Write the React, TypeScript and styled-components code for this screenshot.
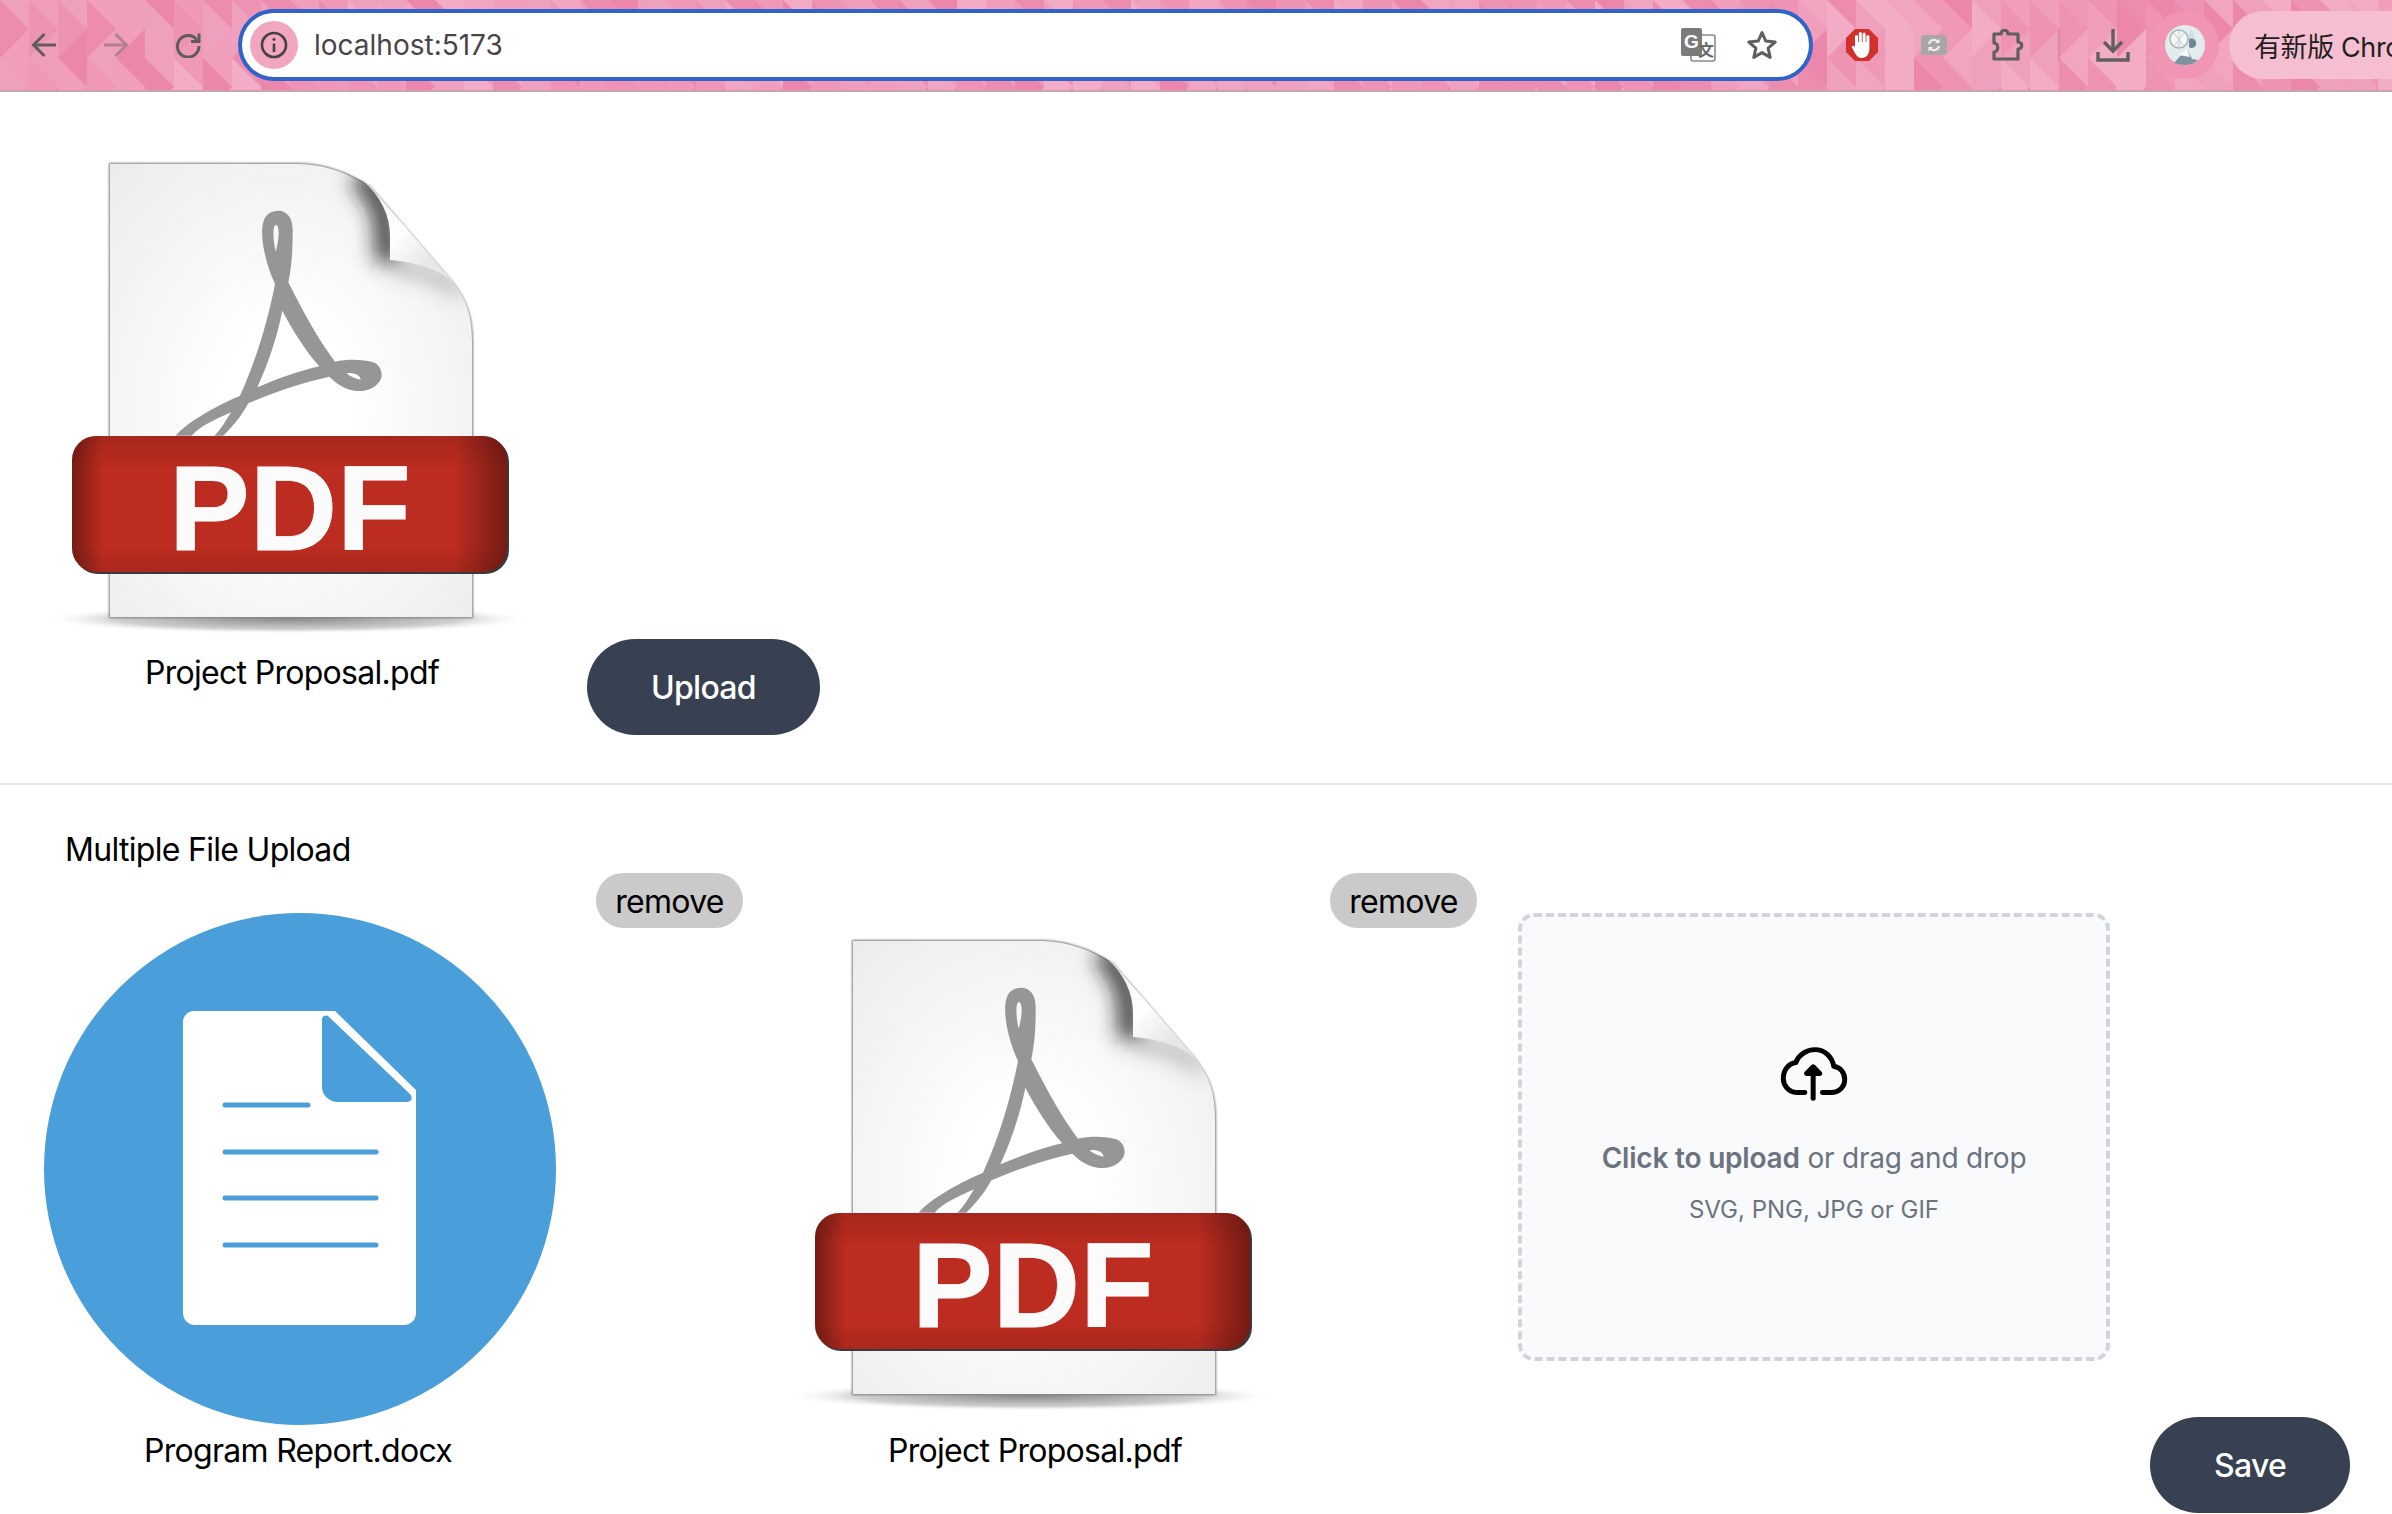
import React from "react";
import styled, { createGlobalStyle } from "styled-components";

const GlobalStyle = createGlobalStyle`
    html, body {
        margin: 0;
        padding: 0;
        background: #ffffff;
        overflow: hidden;
    }
    body {
        font-family: Inter, "Liberation Sans", "Noto Sans CJK SC", sans-serif;
        color: #000000;
    }
`;

const Page = styled.div`
    width: 2392px;
    height: 1514px;
    overflow: hidden;
    display: flex;
    flex-direction: column;
`;

const BrowserBar = styled.div`
    position: relative;
    height: 90px;
    flex: none;
    display: flex;
    align-items: center;
    padding-left: 8px;
    border-bottom: 2px solid #c9a3b3;
    background: #ee97b6;
    overflow: hidden;
`;

const Pattern = styled.svg`
    position: absolute;
    left: 0;
    top: 0;
`;

const Slot = styled.div<{ $gap?: number }>`
    position: relative;
    width: 72px;
    height: 72px;
    flex: none;
    margin-left: ${p => p.$gap || 0}px;
    display: flex;
    align-items: center;
    justify-content: center;
`;

const AddressPill = styled.div`
    position: relative;
    width: 1575px;
    height: 72px;
    flex: none;
    margin-left: 14px;
    box-sizing: border-box;
    border: 4px solid #2f63c9;
    border-radius: 36px;
    background: #ffffff;
    display: flex;
    align-items: center;
    padding: 0 31px 0 8px;
`;

const InfoChip = styled.div`
    width: 48px;
    height: 48px;
    flex: none;
    border-radius: 50%;
    background: #f2a7c0;
    display: flex;
    align-items: center;
    justify-content: center;
`;

const UrlText = styled.div`
    margin-left: 16px;
    flex: 1;
    font-size: 28px;
    line-height: 36px;
    color: #4b4347;
`;

const PillIcons = styled.div`
    display: flex;
    align-items: center;
    gap: 30px;
`;

const ToolbarRule = styled.div`
    position: relative;
    width: 2px;
    height: 32px;
    flex: none;
    margin: 0 17px 0 16px;
    background: #d98aa6;
`;

const AvatarRing = styled.div`
    position: relative;
    width: 68px;
    height: 68px;
    flex: none;
    margin-left: 2px;
    border-radius: 50%;
    background: #f195b5;
    display: flex;
    align-items: center;
    justify-content: center;
`;

const UpdatePill = styled.div`
    position: relative;
    height: 68px;
    width: 240px;
    flex: none;
    margin-left: 10px;
    box-sizing: border-box;
    padding-left: 25px;
    border-radius: 34px 0 0 34px;
    background: #f6bed1;
    display: flex;
    align-items: center;
    font-size: 27px;
    letter-spacing: -0.4px;
    color: #1f1f1f;
    white-space: nowrap;
    overflow: hidden;
`;

const SingleSection = styled.section`
    display: flex;
    align-items: flex-end;
    gap: 39px;
    padding: 44px 0 48px 36px;
    border-bottom: 2px solid #e5e7eb;
`;

const FileColumn = styled.div<{ $pushDown?: number; $bottom?: number }>`
    width: 512px;
    flex: none;
    padding-top: ${p => p.$pushDown || 0}px;
    margin-bottom: ${p => p.$bottom || 0}px;
    display: flex;
    flex-direction: column;
    align-items: center;
`;

const FileName = styled.div<{ $top?: number; $nudge?: number }>`
    margin-top: ${p => p.$top || 0}px;
    margin-right: ${p => p.$nudge || 0}px;
    height: 48px;
    font-size: 32px;
    line-height: 50px;
    letter-spacing: -0.7px;
    white-space: nowrap;
`;

const DarkButton = styled.button`
    height: 96px;
    box-sizing: border-box;
    padding: 0 64px;
    border: none;
    border-radius: 48px;
    background: #374151;
    color: #ffffff;
    font-family: inherit;
    font-size: 32px;
    font-weight: 500;
    letter-spacing: -0.7px;
`;

const SectionTitle = styled.div`
    height: 48px;
    padding: 40px 0 0 65px;
    font-size: 32px;
    line-height: 50px;
    letter-spacing: -0.7px;
`;

const UploadRow = styled.div`
    display: flex;
    align-items: flex-start;
    padding-left: 44px;
`;

const RemoveButton = styled.button<{ $left: number; $right: number }>`
    height: 55px;
    width: 147px;
    flex: none;
    margin: 0 ${p => p.$right}px 0 ${p => p.$left}px;
    padding: 2px 0 0;
    border: none;
    border-radius: 28px;
    background: #cacaca;
    color: #000000;
    font-family: inherit;
    font-size: 32px;
    letter-spacing: -0.7px;
`;

const DropZone = styled.div`
    width: 592px;
    height: 448px;
    flex: none;
    margin-top: 40px;
    box-sizing: border-box;
    padding-bottom: 4px;
    border: 4px dashed #d1d5db;
    border-radius: 16px;
    background: #f9fafb;
    display: flex;
    flex-direction: column;
    align-items: center;
    justify-content: center;
`;

const CloudIcon = styled.svg`
    margin-bottom: 36px;
`;

const PuzzleSvg = styled.svg`
    margin-left: 4px;
`;

const DropText = styled.div`
    font-size: 28px;
    line-height: 40px;
    letter-spacing: -0.2px;
    color: #6b7280;
    margin-bottom: 16px;
    b {
        font-weight: 600;
    }
`;

const DropHint = styled.div`
    font-size: 24px;
    line-height: 32px;
    color: #6b7280;
`;

const SaveSlot = styled.div`
    margin: 544px 0 0 40px;
    flex: none;
`;

// Triangle wallpaper of the browser theme, seeded so that it stays the same between runs
const pinks = ["#ec8db0", "#ee93b4", "#ef98b8", "#f09ebc", "#f2a5c1", "#f3acc6", "#ea87ab", "#efa0bd"];

const buildTriangles = () => {
    let seed = 17;
    const next = () => {
        seed = (seed * 9301 + 49297) % 233280;
        return seed / 233280;
    };
    const out: { points: string; fill: string }[] = [];
    const w = 29;
    const h = 58;
    for (let c = 0; c < 84; c++) {
        const x = c * w;
        const off = c % 2 === 0 ? 0 : -h / 2;
        for (let r = -1; r < 4; r++) {
            const y = off + r * h;
            const right = c % 2 === 0;
            out.push({
                points: right ? `${x},${y} ${x + w},${y + h / 2} ${x},${y + h}` : `${x + w},${y} ${x},${y + h / 2} ${x + w},${y + h}`,
                fill: pinks[Math.floor(next() * pinks.length)],
            });
            out.push({
                points: right
                    ? `${x},${y + h} ${x + w},${y + h / 2} ${x + w},${y + h + h / 2}`
                    : `${x + w},${y + h} ${x},${y + h / 2} ${x},${y + h + h / 2}`,
                fill: pinks[Math.floor(next() * pinks.length)],
            });
        }
    }
    return out;
};

const triangles = buildTriangles();

const ThemePattern = () => (
    <Pattern width="2392" height="90">
        {triangles.map((t, i) => (
            <polygon key={i} points={t.points} fill={t.fill} />
        ))}
    </Pattern>
);

const ArrowIcon = ({ flip, color }: { flip?: boolean; color: string }) => (
    <svg width="26" height="26" viewBox="0 0 26 26" fill="none" stroke={color} strokeWidth="3">
        <g transform={flip ? "rotate(180 13 13)" : undefined}>
            <path d="M25 13H3" />
            <path d="M13.5 2L2.5 13l11 11" />
        </g>
    </svg>
);

const ReloadIcon = () => (
    <svg width="26" height="26" viewBox="0 0 26 26" fill="none" stroke="#5c5c5c" strokeWidth="3">
        <path d="M22 8A10.8 10.8 0 1 0 24 14" />
        <path d="M24 1.5V9.5H16" />
    </svg>
);

const InfoIcon = () => (
    <svg width="28" height="28" viewBox="0 0 28 28" fill="none" stroke="#4a3f44" strokeWidth="2.6">
        <circle cx="14" cy="14" r="12" />
        <path d="M14 12.5V21" />
        <circle cx="14" cy="8.4" r="1.2" fill="#4a3f44" strokeWidth="0.8" />
    </svg>
);

const TranslateIcon = () => (
    <svg width="35" height="34" viewBox="0 0 35 34">
        <rect x="10" y="7" width="24" height="26" rx="2" fill="#ffffff" stroke="#8a8a8a" strokeWidth="1.6" />
        <rect x="0" y="0" width="21" height="28" rx="2" fill="#7b7b7b" />
        <text x="3" y="20" fontFamily="Liberation Sans, sans-serif" fontWeight="700" fontSize="19" fill="#ffffff">
            G
        </text>
        <text x="17" y="28" fontFamily="Noto Sans CJK SC, sans-serif" fontWeight="700" fontSize="16" fill="#6a6a6a">
            文
        </text>
    </svg>
);

const StarIcon = () => (
    <svg width="32" height="32" viewBox="0 0 32 32" fill="none" stroke="#5f5f5f" strokeWidth="3" strokeLinejoin="round">
        <path d="M16 3.5l3.8 8.6 9.4.9-7.1 6.2 2.1 9.2-8.2-4.8-8.2 4.8 2.1-9.2-7.1-6.2 9.4-.9z" />
    </svg>
);

const AdblockIcon = () => (
    <svg width="34" height="34" viewBox="0 0 34 34">
        <path d="M10 1h14l9 9v14l-9 9H10l-9-9V10z" fill="#d2302a" />
        <path
            d="M10 15V8.5a1.500 1.500 0 0 1 3 0V14h.8V5.500a1.500 1.500 0 0 1 3 0V14h.8V6a1.500 1.500 0 0 1 3 0v8h.8V8.500a1.500 1.500 0 0 1 3 0V21c0 5-3.200 9-7.500 9-3.500 0-5.300-1.800-6.700-4.500l-3.200-6c-.7-1.300 1.300-2.500 2.300-1.200L10 20z"
            fill="#ffffff"
        />
    </svg>
);

const SyncBadge = () => (
    <svg width="26" height="20" viewBox="0 0 26 20">
        <rect x="0" y="0" width="26" height="20" rx="3" fill="#a9a6a7" />
        <path d="M8 9a5 5 0 0 1 9-2M18 11a5 5 0 0 1-9 2" fill="none" stroke="#f0eeee" strokeWidth="2" />
        <path d="M18.500 3.500v4.500H14M7.500 16.500V12H12" fill="#f0eeee" />
    </svg>
);

const PuzzleIcon = () => (
    <PuzzleSvg width="34" height="32" viewBox="0 0 34 32" fill="none" stroke="#5f5f5f" strokeWidth="3.2" strokeLinejoin="round">
        <path d="M3 5h7c0-5 7-5 7 0h10v8c5 0 5 7 0 7v10H3v-7c5 0 5-9 0-9z" />
    </PuzzleSvg>
);

const DownloadIcon = () => (
    <svg width="34" height="34" viewBox="0 0 34 34" fill="none" stroke="#5f5f5f" strokeWidth="3.4">
        <path d="M17 1v21" />
        <path d="M8 14l9 9 9-9" />
        <path d="M2 24v8h30v-8" />
    </svg>
);

const AvatarPicture = () => (
    <svg width="40" height="40" viewBox="0 0 40 40">
        <circle cx="20" cy="20" r="20" fill="#e3ecec" />
        <circle cx="14" cy="14" r="9" fill="#f4f7f6" stroke="#a9b5b8" strokeWidth="1.500" />
        <path d="M14 6v16M9 8l9 12M19 8l-9 12" stroke="#c3cdcf" strokeWidth="1" />
        <path d="M26 4l4 9-4 3-3-5z" fill="#cfdde4" />
        <path d="M24 14c5-2 8 2 7 6-1 3-5 4-7 2z" fill="#6d8796" />
        <path d="M9 38l8-9 6-3 4 8 6 1c-3 3-8 5-13 5-4 0-8-1-11-2z" fill="#7e93a0" />
        <path d="M13 30l9-6 3 8z" fill="#f6f8f8" />
    </svg>
);

const PdfIcon = () => (
    <svg width="512" height="512" viewBox="0 0 512 512">
        <defs>
            <radialGradient id="paper" cx="0.48" cy="0.55" r="0.72">
                <stop offset="0.25" stopColor="#ffffff" />
                <stop offset="1" stopColor="#ececec" />
            </radialGradient>
            <radialGradient id="ground">
                <stop offset="0" stopColor="#8c8c8c" />
                <stop offset="0.7" stopColor="#d0d0d0" />
                <stop offset="1" stopColor="#ffffff" stopOpacity="0" />
            </radialGradient>
            <linearGradient id="flap" x1="0.1" y1="0.1" x2="0.7" y2="0.8">
                <stop offset="0" stopColor="#f4f4f4" />
                <stop offset="0.55" stopColor="#ffffff" />
                <stop offset="1" stopColor="#e8e8e8" />
            </linearGradient>
            <linearGradient id="bandSides">
                <stop offset="0" stopColor="#000000" stopOpacity="0.38" />
                <stop offset="0.07" stopColor="#000000" stopOpacity="0" />
                <stop offset="0.88" stopColor="#000000" stopOpacity="0" />
                <stop offset="1" stopColor="#000000" stopOpacity="0.38" />
            </linearGradient>
            <linearGradient id="bandEdges" x1="0" y1="0" x2="0" y2="1">
                <stop offset="0" stopColor="#000000" stopOpacity="0.12" />
                <stop offset="0.25" stopColor="#000000" stopOpacity="0" />
                <stop offset="0.8" stopColor="#000000" stopOpacity="0" />
                <stop offset="1" stopColor="#000000" stopOpacity="0.1" />
            </linearGradient>
            <filter id="soft" x="-40%" y="-40%" width="180%" height="180%">
                <feGaussianBlur stdDeviation="10" />
            </filter>
            <filter id="hair" x="-5%" y="-5%" width="110%" height="110%">
                <feGaussianBlur stdDeviation="1" />
            </filter>
            <clipPath id="sheet">
                <path d="M73 27H265C290 28 312 36 334 50L417 146C430 163 437 180 437 205V482H73Z" />
            </clipPath>
        </defs>
        <ellipse cx="252" cy="483" rx="246" ry="15" fill="url(#ground)" />
        <path
            d="M73 27H265C290 28 312 36 334 50L417 146C430 163 437 180 437 205V482H73Z"
            fill="#7d7d7d"
            filter="url(#hair)"
        />
        <path d="M74 28H265C290 29 312 37 334 51L417 146C430 163 436 180 436 205V481H74Z" fill="url(#paper)" />
        <g clipPath="url(#sheet)" filter="url(#soft)" fill="none">
            <path d="M322 40C344 58 350 80 350 100V126" stroke="#222222" strokeWidth="22" opacity="0.85" />
            <path d="M354 130C380 132 403 139 424 156" stroke="#555555" strokeWidth="12" opacity="0.45" />
        </g>
        <path d="M327 45C345 60 354 80 354 100V124C380 126 403 133 417 146L334 50Z" fill="url(#flap)" />
        <g transform="translate(-6 3) scale(0.33333)">
            <path
                fill="#969696"
                fillRule="evenodd"
                d="M437 890C470 850 560 800 630 770C680 660 715 540 735 435C700 360 690 280 700 250C705 225 725 215 745 215C770 215 790 235 788 280C788 340 785 380 775 430C820 520 870 610 915 668C950 660 1000 660 1030 670C1055 680 1060 710 1050 725C1030 755 990 762 960 752C935 745 915 730 898 713C820 730 730 760 655 793C630 840 600 870 580 890H553C575 870 590 840 603 820C560 840 510 860 485 890Z
                M737 258C728 260 728 300 737 338C748 300 750 258 737 258Z
                M757 515C740 600 712 680 682 745C740 720 810 695 868 682C830 640 785 570 757 515Z
                M950 703C965 700 990 705 992 722C975 720 960 712 950 703Z"
            />
        </g>
        <rect x="38" y="302" width="435" height="136" rx="24" fill="#3a3a3a" />
        <rect x="36" y="300" width="435" height="136" rx="24" fill="#bd2c20" />
        <rect x="36" y="300" width="435" height="136" rx="24" fill="url(#bandSides)" />
        <rect x="36" y="300" width="435" height="136" rx="24" fill="url(#bandEdges)" />
        <text
            x="254"
            y="413.500"
            textAnchor="middle"
            fontFamily="Liberation Sans, sans-serif"
            fontWeight="700"
            fontSize="121"
            fill="#fbfbfb"
            stroke="#fbfbfb"
            strokeWidth="0.8"
        >
            PDF
        </text>
    </svg>
);

const DocxIcon = () => (
    <svg width="512" height="512" viewBox="0 0 512 512">
        <circle cx="256" cy="256" r="256" fill="#4a9eda" />
        <path d="M150 98H291L372 177V400a12 12 0 0 1-12 12H151a12 12 0 0 1-12-12V109a11 11 0 0 1 11-11Z" fill="#ffffff" />
        <path d="M278 106a4 4 0 0 1 7-2L366 181c3 3 2 8-3 8H294c-9 0-16-7-16-15Z" fill="#4a9eda" />
        <g stroke="#4a9eda" strokeWidth="5" strokeLinecap="round">
            <path d="M181 192H264" />
            <path d="M181 239H332" />
            <path d="M181 285H332" />
            <path d="M181 332H332" />
        </g>
    </svg>
);

const App = () => (
    <Page>
        <GlobalStyle />
        <BrowserBar>
            <ThemePattern />
            <Slot>
                <ArrowIcon color="#5e5e5e" />
            </Slot>
            <Slot>
                <ArrowIcon flip color="#b57f92" />
            </Slot>
            <Slot>
                <ReloadIcon />
            </Slot>
            <AddressPill>
                <InfoChip>
                    <InfoIcon />
                </InfoChip>
                <UrlText>localhost:5173</UrlText>
                <PillIcons>
                    <TranslateIcon />
                    <StarIcon />
                </PillIcons>
            </AddressPill>
            <Slot $gap={13}>
                <AdblockIcon />
            </Slot>
            <Slot>
                <SyncBadge />
            </Slot>
            <Slot>
                <PuzzleIcon />
            </Slot>
            <ToolbarRule />
            <Slot>
                <DownloadIcon />
            </Slot>
            <AvatarRing>
                <AvatarPicture />
            </AvatarRing>
            <UpdatePill>有新版 Chrome</UpdatePill>
        </BrowserBar>

        <SingleSection>
            <FileColumn $bottom={39}>
                <PdfIcon />
                <FileName>Project Proposal.pdf</FileName>
            </FileColumn>
            <DarkButton>Upload</DarkButton>
        </SingleSection>

        <SectionTitle>Multiple File Upload</SectionTitle>
        <UploadRow>
            <FileColumn $pushDown={40}>
                <DocxIcon />
                <FileName $top={1} $nudge={4}>Program Report.docx</FileName>
            </FileColumn>
            <RemoveButton $left={40} $right={36}>remove</RemoveButton>
            <FileColumn $pushDown={40}>
                <PdfIcon />
                <FileName $top={1}>Project Proposal.pdf</FileName>
            </FileColumn>
            <RemoveButton $left={39} $right={41}>remove</RemoveButton>
            <DropZone>
                <CloudIcon width="68" height="57" viewBox="60 45 205 170" fill="none" stroke="#000000" strokeWidth="15" strokeLinecap="round" strokeLinejoin="round">
                    <path d="M135 187H110C85 187 70 165 70 145C70 120 85 100 108 97C115 75 140 58 165 58C195 58 217 80 222 108C243 112 255 128 255 148C255 170 238 187 215 187H188" />
                    <path d="M160 205V112" />
                    <path d="M140 130L160 110L180 130Z" fill="#000000" />
                </CloudIcon>
                <DropText>
                    <b>Click to upload</b> or drag and drop
                </DropText>
                <DropHint>SVG, PNG, JPG or GIF</DropHint>
            </DropZone>
            <SaveSlot>
                <DarkButton>Save</DarkButton>
            </SaveSlot>
        </UploadRow>
    </Page>
);

export default App;
